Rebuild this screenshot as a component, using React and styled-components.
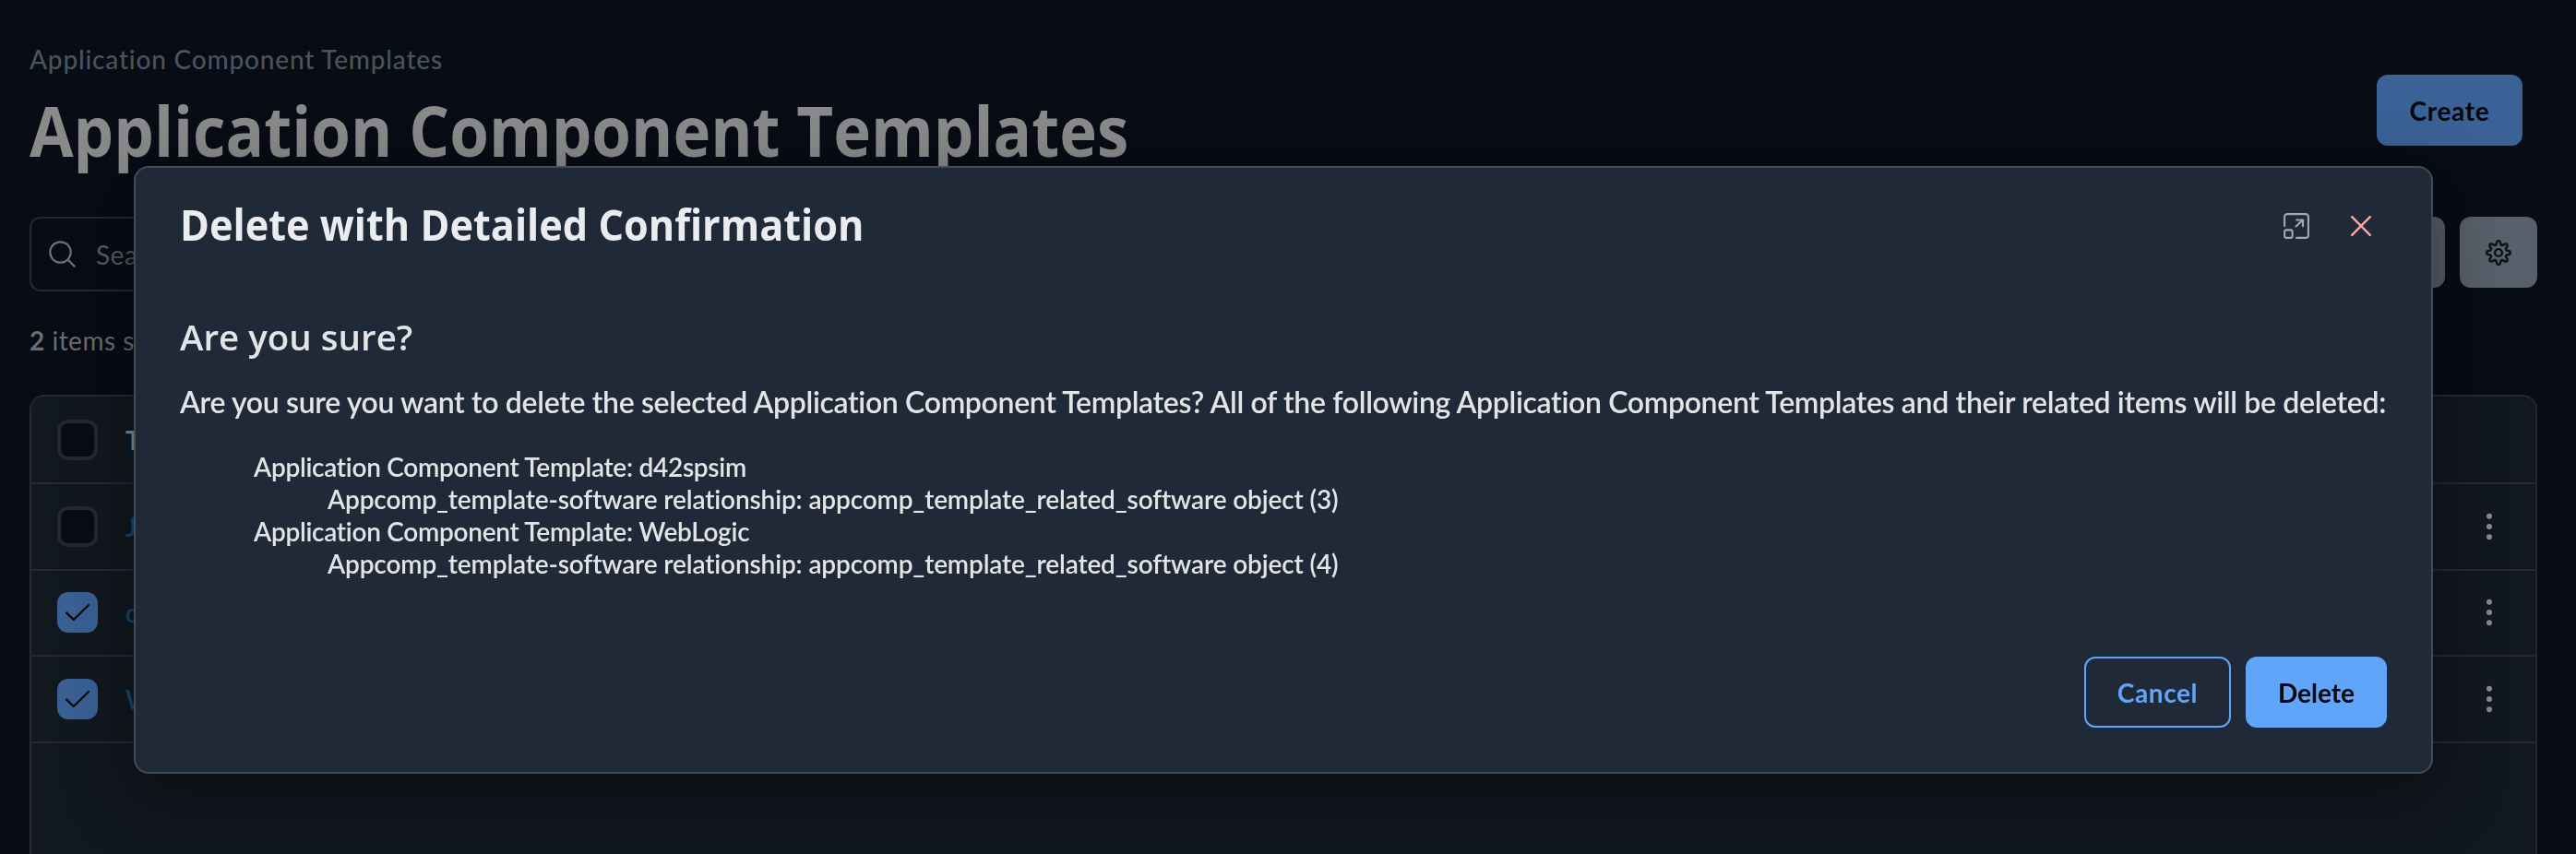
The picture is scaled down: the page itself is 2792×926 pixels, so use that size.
import React from 'react';
import styled, { createGlobalStyle, css } from 'styled-components';

const bodyFont = 'Lato, "Liberation Sans", sans-serif';
const headingFont = '"Open Sans", "Noto Sans", sans-serif';

const GlobalStyle = createGlobalStyle`
  *, *::before, *::after { box-sizing: border-box; }
  body {
    margin: 0;
    background: #070c15;
    font-family: ${bodyFont};
    overflow: hidden;
  }
  h1, h2, h3, p, ul { margin: 0; padding: 0; font-weight: inherit; }
  ul { list-style: none; }
  button { font-family: inherit; cursor: pointer; }
`;

const Page = styled.main`
  height: 926px;
  padding: 47px 42px 0 32px;
  display: flex;
  flex-direction: column;
  overflow: hidden;
  color: #6b6d70;
  font-size: 28px;
  white-space: nowrap;
`;

const PageHeader = styled.header`
  display: flex;
  justify-content: space-between;
  height: 188px;
  padding-right: 16px;
`;

const Breadcrumb = styled.div`
  color: #4b535b;
  line-height: 34px;
  font-weight: 500;
  letter-spacing: 0.81px;
`;

const PageTitle = styled.h1`
  margin-top: 15px;
  color: #8a8a8b;
  font-family: ${headingFont};
  font-size: 75px;
  font-weight: 700;
  line-height: 90px;
  transform: scaleX(0.92);
  transform-origin: left;
`;

const Button = styled.button`
  height: 77px;
  width: ${(p) => p.$width}px;
  padding: 0;
  border: 2px solid ${(p) => p.$border || p.$fill};
  border-radius: 12px;
  background: ${(p) => p.$fill || 'transparent'};
  color: ${(p) => p.$ink || '#02060d'};
  display: flex;
  align-items: center;
  justify-content: center;
  font-size: 28px;
  font-weight: 700;
  line-height: 34px;
  letter-spacing: ${(p) => p.$tracking || 0}px;
`;

const CreateButton = styled(Button)`
  margin-top: 34px;
`;

const Toolbar = styled.div`
  display: flex;
  justify-content: space-between;
`;

const SearchBox = styled.div`
  width: 720px;
  height: 81px;
  padding-left: 19px;
  border: 2px solid #252930;
  border-radius: 12px;
  display: flex;
  align-items: center;
  gap: 22px;
  color: #595b5e;
  letter-spacing: 0.5px;
`;

const ToolbarActions = styled.div`
  display: flex;
  gap: 16px;
`;

const Selection = styled.div`
  margin-top: 36px;
  line-height: 34px;
  height: 76px;
  letter-spacing: 0.5px;
`;

const Table = styled.section`
  flex: 1;
  border: 2px solid #252932;
  border-bottom: 0;
  border-radius: 16px 16px 0 0;
  background: #12181f;
`;

const Row = styled.div`
  height: ${(p) => (p.$head ? 95 : 93.67)}px;
  border-bottom: 2px solid #252932;
  padding: 0 47px 0 28px;
  display: flex;
  align-items: center;
  color: ${(p) => (p.$head ? '#8a8a8b' : '#0e4c72')};
  font-weight: ${(p) => (p.$head ? 700 : 600)};
`;

const Check = styled.span`
  width: 44px;
  height: 44px;
  margin-right: 30px;
  border-radius: 12px;
  display: grid;
  place-items: center;
  ${(p) =>
    p.$on
      ? css`background: #3a6195;`
      : css`background: #070c15; border: 4px solid #252930;`}
`;

const Name = styled.span`
  flex: 1;
`;

const Overlay = styled.div`
  position: fixed;
  inset: 0;
  display: flex;
  align-items: flex-start;
  padding: 180px 0 0 145px;
`;

const Dialog = styled.section`
  width: 2492px;
  height: 659px;
  padding: 0 48px 48px;
  border: 2px solid #434b59;
  border-radius: 16px;
  background: #202937;
  box-shadow: 0 22px 76px rgba(0, 0, 0, 0.42);
  color: #e3e4e6;
  display: flex;
  flex-direction: column;
  white-space: nowrap;
`;

const DialogHeader = styled.header`
  height: 126px;
  display: flex;
  align-items: center;
  justify-content: space-between;
`;

const DialogTitle = styled.h2`
  margin-bottom: 4px;
  color: #ebecf0;
  font-family: ${headingFont};
  font-size: 47px;
  font-weight: 700;
  line-height: 60px;
  transform: scaleX(0.92);
  transform-origin: left;
`;

const DialogTools = styled.div`
  display: flex;
  align-items: center;
  gap: 45px;
  padding-right: 17px;
`;

const Question = styled.h3`
  margin-top: 31px;
  font-family: ${headingFont};
  font-size: 38.5px;
  font-weight: 600;
  line-height: 52px;
`;

const Message = styled.p`
  margin-top: 25px;
  font-size: 32px;
  font-weight: 600;
  line-height: 40px;
  letter-spacing: -0.34px;
`;

const ItemList = styled.ul`
  margin-top: 33px;
  flex: 1;
  font-weight: 600;
  font-size: 28px;
  line-height: 35px;
`;

const Item = styled.li`
  padding-left: ${(p) => p.$level * 80}px;
  letter-spacing: ${(p) => (p.$level === 1 ? -0.28 : -0.14)}px;
`;

const DialogFooter = styled.footer`
  display: flex;
  justify-content: flex-end;
  gap: 16px;
`;

const stroke = { fill: 'none', strokeLinecap: 'round', strokeLinejoin: 'round' };

const SearchIcon = () => (
  <svg width="29" height="29" viewBox="0 0 29 29" {...stroke} stroke="#6f7173" strokeWidth="2.2">
    <circle cx="12.5" cy="12.5" r="11.2" />
    <path d="M20.6 20.6 27.6 27.6" />
  </svg>
);

const gearPath = (() => {
  const steps = 128;
  const points = Array.from({ length: steps }, (_, i) => {
    const a = (i / steps) * Math.PI * 2;
    const wave = Math.tanh(1.3 * Math.cos(8 * a)) / Math.tanh(1.3);
    const r = 10.8 + 2 * wave;
    return `${(14 + r * Math.cos(a)).toFixed(2)} ${(14 + r * Math.sin(a)).toFixed(2)}`;
  });
  return `M${points.join('L')}Z`;
})();

const GearIcon = () => (
  <svg width="28" height="28" viewBox="0 0 28 28" {...stroke} stroke="#0b1118" strokeWidth="2.4">
    <path d={gearPath} />
    <circle cx="14" cy="14" r="3.9" />
  </svg>
);

const CheckIcon = () => (
  <svg width="28" height="20" viewBox="0 0 28 20" {...stroke} stroke="#03070e" strokeWidth="2.2">
    <path d="M2 10.4 9.8 18 26 2" />
  </svg>
);

const KebabIcon = () => (
  <svg width="6" height="30" viewBox="0 0 6 30" fill="#8a8a8b">
    <circle cx="3" cy="3.8" r="3" />
    <circle cx="3" cy="15" r="3" />
    <circle cx="3" cy="26.2" r="3" />
  </svg>
);

const MaximizeIcon = () => (
  <svg width="28" height="28" viewBox="0 0 28 28" {...stroke} stroke="#a4a8ad" strokeWidth="2.1">
    <path d="M1.1 14V4a2.9 2.9 0 0 1 2.9-2.9h20a2.9 2.9 0 0 1 2.9 2.9v20a2.9 2.9 0 0 1-2.9 2.9H14" />
    <rect x="1.1" y="18.4" width="8.5" height="8.5" rx="2" />
    <path d="M13.5 14.5 21 7.5M14.2 7.5H21V14.3" />
  </svg>
);

const CloseIcon = () => (
  <svg width="22" height="22" viewBox="0 0 22 22" {...stroke} stroke="#fca5a5" strokeWidth="2.4">
    <path d="M1.2 1.2 20.8 20.8M20.8 1.2 1.2 20.8" />
  </svg>
);

const rows = [
  { name: 'Jenkins', on: false },
  { name: 'd42spsim', on: true },
  { name: 'WebLogic', on: true },
];

const affected = [
  [1, 'Application Component Template: d42spsim'],
  [2, 'Appcomp_template-software relationship: appcomp_template_related_software object (3)'],
  [1, 'Application Component Template: WebLogic'],
  [2, 'Appcomp_template-software relationship: appcomp_template_related_software object (4)'],
];

export default function App() {
  return (
    <>
      <GlobalStyle />
      <Page>
        <PageHeader>
          <div>
            <Breadcrumb>Application Component Templates</Breadcrumb>
            <PageTitle>Application Component Templates</PageTitle>
          </div>
          <CreateButton $width={158} $fill="#3a6296" $tracking={0.7}>Create</CreateButton>
        </PageHeader>
        <Toolbar>
          <SearchBox>
            <SearchIcon />
            Search
          </SearchBox>
          <ToolbarActions>
            <Button $width={84} $fill="#565c67" />
            <Button $width={84} $fill="#58606b"><GearIcon /></Button>
          </ToolbarActions>
        </Toolbar>
        <Selection><b>2</b> items selected</Selection>
        <Table>
          <Row $head>
            <Check />
            <Name>Template Name</Name>
          </Row>
          {rows.map((row) => (
            <Row key={row.name}>
              <Check $on={row.on}>{row.on && <CheckIcon />}</Check>
              <Name>{row.name}</Name>
              <KebabIcon />
            </Row>
          ))}
        </Table>
      </Page>
      <Overlay>
        <Dialog role="dialog">
          <DialogHeader>
            <DialogTitle>Delete with Detailed Confirmation</DialogTitle>
            <DialogTools>
              <MaximizeIcon />
              <CloseIcon />
            </DialogTools>
          </DialogHeader>
          <Question>Are you sure?</Question>
          <Message>
            Are you sure you want to delete the selected Application Component Templates? All of the
            following Application Component Templates and their related items will be deleted:
          </Message>
          <ItemList>
            {affected.map(([level, text]) => (
              <Item key={text} $level={level}>{text}</Item>
            ))}
          </ItemList>
          <DialogFooter>
            <Button $width={159} $border="#60a5fa" $ink="#60a5fa" $tracking={0.6}>Cancel</Button>
            <Button $width={153} $fill="#60a5fa">Delete</Button>
          </DialogFooter>
        </Dialog>
      </Overlay>
    </>
  );
}
